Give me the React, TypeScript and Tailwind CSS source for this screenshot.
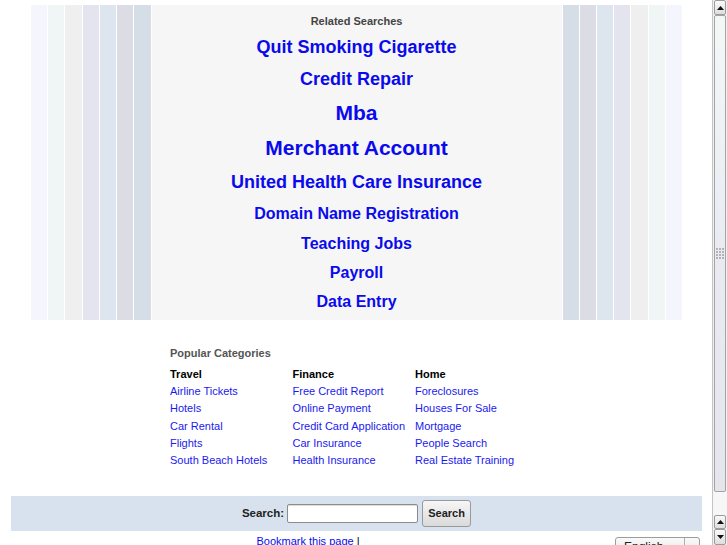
import React from 'react';

const leftStripes = [
  'bg-[#f5f5fd]',
  'bg-[#eff6f5]',
  'bg-[#efefef]',
  'bg-[#e4e4ee]',
  'bg-[#dde5ee]',
  'bg-[#dcdce4]',
  'bg-[#d5dde6]',
];
const rightStripes = [...leftStripes].reverse();

// leading sets the row pitch of the tag cloud
const related = [
  { label: 'Quit Smoking Cigarette', cls: 'text-[18px] leading-[32px]' },
  { label: 'Credit Repair', cls: 'text-[18px] leading-[32px]' },
  { label: 'Mba', cls: 'text-[21px] leading-[35px]' },
  { label: 'Merchant Account', cls: 'text-[21px] leading-[35px]' },
  { label: 'United Health Care Insurance', cls: 'text-[18px] leading-[34px]' },
  { label: 'Domain Name Registration', cls: 'text-[16px] leading-[30px]' },
  { label: 'Teaching Jobs', cls: 'text-[16px] leading-[29px]' },
  { label: 'Payroll', cls: 'text-[16px] leading-[29px]' },
  { label: 'Data Entry', cls: 'text-[16px] leading-[29px]' },
];

const categories = [
  { title: 'Travel', links: ['Airline Tickets', 'Hotels', 'Car Rental', 'Flights', 'South Beach Hotels'] },
  { title: 'Finance', links: ['Free Credit Report', 'Online Payment', 'Credit Card Application', 'Car Insurance', 'Health Insurance'] },
  { title: 'Home', links: ['Foreclosures', 'Houses For Sale', 'Mortgage', 'People Search', 'Real Estate Training'] },
];

const ArrowButton: React.FC<{ dir: 'up' | 'down'; h: string }> = ({ dir, h }) => (
  <div className={`${h} mx-px flex shrink-0 items-center justify-center rounded-[2px] border border-[#9c9c9c] bg-gradient-to-b from-[#fafafa] to-[#dedede]`}>
    <svg width="7" height="4" viewBox="0 0 7 4">
      {dir === 'up' ? <polygon points="0,4 7,4 3.5,0" fill="#111" /> : <polygon points="0,0 7,0 3.5,4" fill="#111" />}
    </svg>
  </div>
);

const Scrollbar = () => (
  <div className="flex h-[545px] w-[15px] shrink-0 flex-col border-l border-[#c4c4c4] bg-[#f0f0f0]">
    <ArrowButton dir="up" h="h-[15px]" />
    <div className="mx-px flex h-[477px] shrink-0 items-center justify-center rounded-[2px] border border-[#a4a4a4] bg-gradient-to-b from-[#f3f8f7] via-[#e9ebf1] to-[#e4e6ec]">
      <svg width="9" height="12" viewBox="0 0 9 12">
        {[0, 3, 6, 9].map((y) =>
          [0, 3, 6].map((x) => <rect key={`${x}-${y}`} x={x} y={y} width="2" height="2" fill="#b4b4b8" />)
        )}
      </svg>
    </div>
    <div className="h-[23px] shrink-0 bg-[#f7f7f7]" />
    <ArrowButton dir="up" h="h-[14px]" />
    <ArrowButton dir="down" h="h-[16px]" />
  </div>
);

export default function App() {
  return (
    <div className="flex h-[545px] w-[727px] overflow-hidden bg-white font-['Liberation_Sans',Arial,sans-serif]">
      <div className="w-[712px] shrink-0">
        {/* Related searches band */}
        <div className="ml-[31px] mt-[5px] flex h-[315px] w-[651px] gap-px bg-white">
          {leftStripes.map((c, i) => (
            <div key={`l${i}`} className={`flex-1 ${c}`} />
          ))}
          <div className="flex w-[410px] shrink-0 flex-col items-center bg-[#f6f6f6] pt-[9px]">
            <div className="text-[11px] font-bold leading-[14px] text-[#444]">Related Searches</div>
            <div className="mt-[3px] flex flex-col items-center">
              {related.map((r) => (
                <a key={r.label} href="#" className={`font-bold text-[#0a0aec] ${r.cls}`}>
                  {r.label}
                </a>
              ))}
            </div>
          </div>
          {rightStripes.map((c, i) => (
            <div key={`r${i}`} className={`flex-1 ${c}`} />
          ))}
        </div>

        {/* Popular categories */}
        <div className="h-[176px] pl-[170px] pt-[25px] text-[11px]">
          <div className="font-bold leading-[17px] text-[#555]">Popular Categories</div>
          <div className="mt-[4px] flex">
            {categories.map((cat) => (
              <div key={cat.title} className="w-[122.5px] leading-[17.2px]">
                <div className="font-bold text-black">{cat.title}</div>
                {cat.links.map((l) => (
                  <a key={l} href="#" className="block whitespace-nowrap text-[#1a1aee]">
                    {l}
                  </a>
                ))}
              </div>
            ))}
          </div>
        </div>

        {/* Search bar */}
        <div className="ml-[11px] flex h-[35px] w-[691px] items-center justify-center bg-[#d8e2ee]">
          <span className="mr-[3px] text-[11.5px] font-bold text-[#222]">Search:</span>
          <input
            type="text"
            className="h-[19px] w-[131px] rounded-[2px] border border-[#8c8c8c] bg-white shadow-[inset_0_1px_1px_rgba(0,0,0,0.15)] outline-none"
          />
          <button className="ml-[4px] h-[27px] w-[49px] rounded-[3px] border border-[#999] bg-gradient-to-b from-[#f6f6f6] to-[#dadada] text-[11px] font-bold text-[#222]">
            Search
          </button>
        </div>

        {/* Footer */}
        <div className="ml-[11px] flex w-[691px] pt-[4px]">
          <div className="w-[594px] text-center text-[11px] leading-[13px]">
            <a href="#" className="text-[#0a0aec]">Bookmark this page</a>
            <span className="text-black"> |</span>
          </div>
          <div className="ml-[10px] mt-[2px] flex h-[20px] w-[85px] rounded-[3px] border border-[#9c9c9c] bg-gradient-to-b from-[#fafafa] to-[#e4e4e4] text-[12px]">
            <span className="flex-1 pl-[8px] leading-[18px] text-[#222]">English</span>
            <span className="w-[15px] border-l border-[#b0b0b0]" />
          </div>
        </div>
      </div>
      <Scrollbar />
    </div>
  );
}
